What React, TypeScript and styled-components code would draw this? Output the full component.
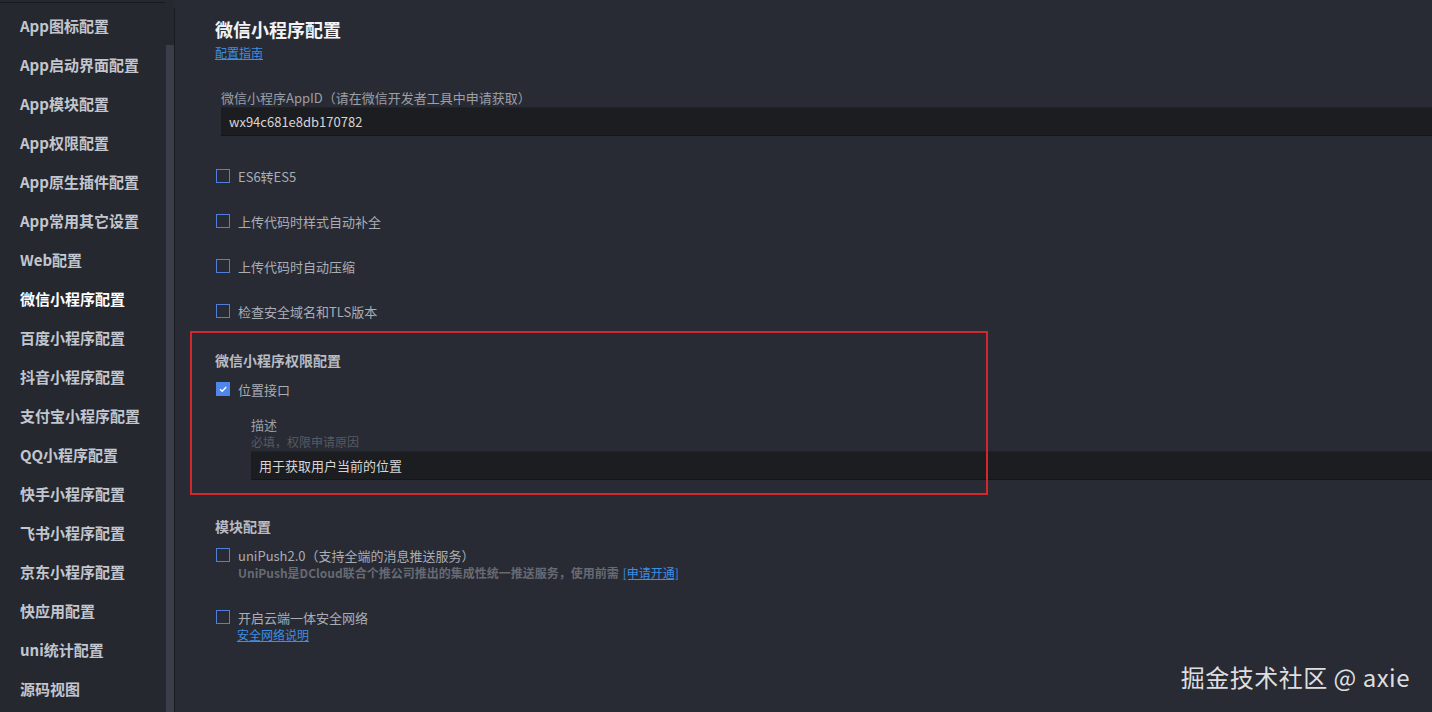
import styled, { createGlobalStyle } from 'styled-components';

const GlobalStyle = createGlobalStyle`
  html, body {
    margin: 0;
    padding: 0;
    background: #282b34;
    font-family: "Noto Sans CJK SC", "Noto Sans", sans-serif;
    overflow: hidden;
  }
`;

const Page = styled.div`
  display: flex;
  height: 712px;
  width: 1432px;
  position: relative;
  background: #282b34;
`;

const Sidebar = styled.div`
  width: 166px;
  background: #262830;
  display: flex;
  flex-direction: column;
  padding-top: 6px;
  position: relative;
`;

const SidebarTopEdge = styled.div`
  position: absolute;
  top: 0;
  left: 0;
  width: 165px;
  height: 2px;
  border-bottom: 1px solid #18191d;
`;

const NavItem = styled.div<{ $active?: boolean }>`
  height: 39px;
  line-height: 39px;
  padding-left: 20px;
  font-size: 15px;
  font-weight: 700;
  color: ${(p) => (p.$active ? '#ffffff' : '#c2c6ce')};
  white-space: nowrap;
`;

const ScrollTrack = styled.div`
  width: 8px;
  background: #262830;
  padding-top: 45px;
  display: flex;
`;

const ScrollThumb = styled.div`
  flex: 1;
  background: #3a3e48;
`;

const Divider = styled.div`
  width: 1px;
  margin-top: 8px;
  background: #1b1c21;
`;

const Main = styled.div`
  flex: 1;
  padding: 17px 0 0 40px;
  display: flex;
  flex-direction: column;
  min-width: 0;
`;

const Title = styled.div`
  font-size: 18px;
  font-weight: 700;
  line-height: 24px;
  color: #f3f3f3;
`;

const Link = styled.a`
  font-size: 12px;
  line-height: 16px;
  color: #3d8fe4;
  text-decoration: underline;
  cursor: pointer;
`;

const TitleLink = styled(Link)`
  margin-top: 4px;
  align-self: flex-start;
`;

const Field = styled.div<{ $indent: number; $gap: number }>`
  margin-left: ${(p) => p.$indent}px;
  margin-top: ${(p) => p.$gap}px;
  display: flex;
  flex-direction: column;
`;

const FieldLabel = styled.div`
  font-size: 13px;
  line-height: 18px;
  color: #9c9fa6;
`;

const FieldHint = styled.div`
  font-size: 12px;
  line-height: 16px;
  color: #575a62;
  margin-bottom: 1px;
`;

const Input = styled.div`
  height: 27px;
  line-height: 27px;
  background: #1c1d21;
  border-top: 1px solid #202228;
  border-bottom: 1px solid #141519;
  padding-left: 8px;
  font-size: 13px;
  color: #d6d6d6;
`;

const CheckList = styled.div`
  margin-top: 30px;
  display: flex;
  flex-direction: column;
  gap: 25px;
`;

const CheckRow = styled.div<{ $gap?: number }>`
  display: flex;
  align-items: center;
  gap: 8px;
  height: 20px;
  margin-left: 1px;
  margin-top: ${(p) => p.$gap ?? 0}px;
  font-size: 13px;
  color: #aaadb4;
  white-space: nowrap;
`;

const Box = styled.span<{ $checked?: boolean }>`
  width: 14px;
  height: 14px;
  box-sizing: border-box;
  border: 1px solid ${(p) => (p.$checked ? '#4f86ec' : '#4f7fd8')};
  background: ${(p) => (p.$checked ? '#4f86ec' : 'transparent')};
  display: flex;
  align-items: center;
  justify-content: center;
`;

const SectionTitle = styled.div<{ $gap?: number }>`
  margin-top: ${(p) => p.$gap ?? 0}px;
  font-size: 14px;
  font-weight: 700;
  line-height: 20px;
  color: #b9bcc3;
`;

const Section = styled.div`
  position: relative;
  display: flex;
  flex-direction: column;
  margin-top: 29px;
`;

const Highlight = styled.div`
  position: absolute;
  left: -25px;
  top: -19px;
  width: 798px;
  bottom: -15px;
  box-sizing: border-box;
  border: 2px solid #d3262d;
  pointer-events: none;
`;

const SubText = styled.div`
  margin-left: 23px;
  font-size: 12px;
  line-height: 16px;
  font-weight: 700;
  color: #676a72;
  white-space: nowrap;
  display: flex;
  gap: 4px;
`;

const SubLink = styled(Link)`
  margin-left: 22px;
  align-self: flex-start;
`;

const InlineLink = styled(Link)`
  font-weight: 400;
`;

const Watermark = styled.div`
  position: absolute;
  right: 22px;
  top: 661px;
  font-size: 24px;
  line-height: 32px;
  color: rgba(255, 255, 255, 0.86);
  letter-spacing: 0.5px;
`;

function Check({ checked, label, gap }: { checked?: boolean; label: string; gap?: number }) {
  return (
    <CheckRow $gap={gap}>
      <Box $checked={checked}>
        {checked && (
          <svg width="10" height="10" viewBox="0 0 10 10">
            <path d="M2 5.2 L4.2 7.2 L8.2 3" fill="none" stroke="#fff" strokeWidth="1.4" />
          </svg>
        )}
      </Box>
      {label}
    </CheckRow>
  );
}

const navItems = [
  'App图标配置',
  'App启动界面配置',
  'App模块配置',
  'App权限配置',
  'App原生插件配置',
  'App常用其它设置',
  'Web配置',
  '微信小程序配置',
  '百度小程序配置',
  '抖音小程序配置',
  '支付宝小程序配置',
  'QQ小程序配置',
  '快手小程序配置',
  '飞书小程序配置',
  '京东小程序配置',
  '快应用配置',
  'uni统计配置',
  '源码视图'
];

export default function App() {
  return (
    <>
      <GlobalStyle />
      <Page>
        <Sidebar>
          <SidebarTopEdge />
          {navItems.map((item) => (
            <NavItem key={item} $active={item === '微信小程序配置'}>
              {item}
            </NavItem>
          ))}
        </Sidebar>
        <ScrollTrack>
          <ScrollThumb />
        </ScrollTrack>
        <Divider />
        <Main>
          <Title>微信小程序配置</Title>
          <TitleLink>配置指南</TitleLink>

          <Field $indent={6} $gap={28}>
            <FieldLabel>微信小程序AppID（请在微信开发者工具中申请获取）</FieldLabel>
            <Input>wx94c681e8db170782</Input>
          </Field>

          <CheckList>
            <Check label="ES6转ES5" />
            <Check label="上传代码时样式自动补全" />
            <Check label="上传代码时自动压缩" />
            <Check label="检查安全域名和TLS版本" />
          </CheckList>

          <Section>
            <Highlight />
            <SectionTitle>微信小程序权限配置</SectionTitle>
            <Check checked label="位置接口" gap={9} />
            <Field $indent={36} $gap={17}>
              <FieldLabel>描述</FieldLabel>
              <FieldHint>必填，权限申请原因</FieldHint>
              <Input>用于获取用户当前的位置</Input>
            </Field>
          </Section>

          <SectionTitle $gap={36}>模块配置</SectionTitle>
          <Check label="uniPush2.0（支持全端的消息推送服务）" gap={9} />
          <SubText>
            UniPush是DCloud联合个推公司推出的集成性统一推送服务，使用前需
            <InlineLink>[申请开通]</InlineLink>
          </SubText>
          <Check label="开启云端一体安全网络" gap={26} />
          <SubLink>安全网络说明</SubLink>
        </Main>
        <Watermark>掘金技术社区 @ axie</Watermark>
      </Page>
    </>
  );
}
